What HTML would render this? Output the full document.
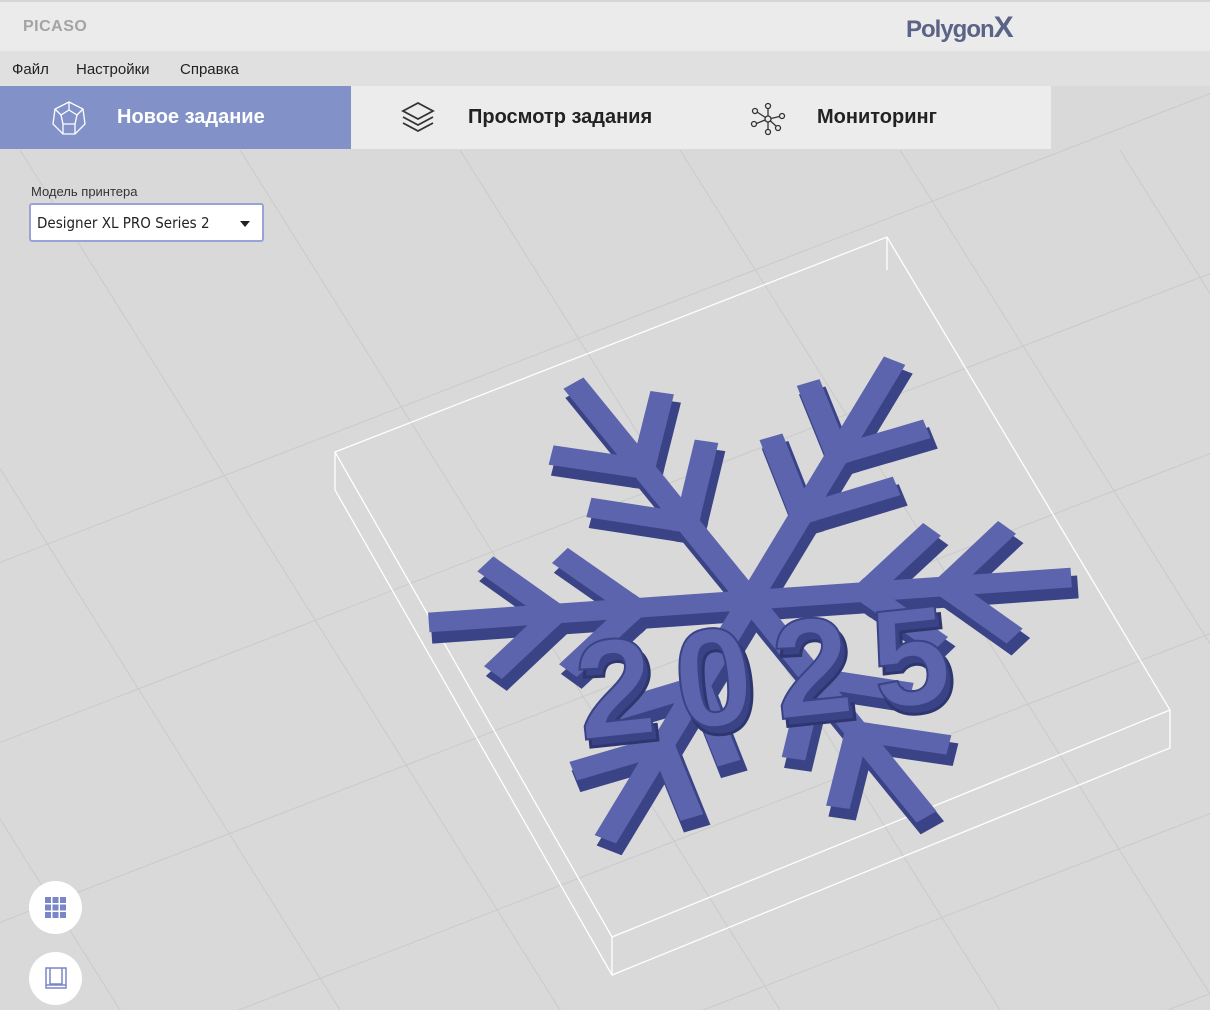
<!DOCTYPE html>
<html><head><meta charset="utf-8"><style>
*{margin:0;padding:0;box-sizing:border-box}
html,body{width:1210px;height:1010px;overflow:hidden}
body{background:#d9d9d9;font-family:"Liberation Sans","DejaVu Sans",sans-serif;position:relative}
.hdr{position:absolute;left:0;top:0;width:1210px;height:51px;background:#ebebeb;border-top:2px solid #d5d5d5}
.picaso{position:absolute;left:23px;top:16px;font-size:16px;color:#a3a3a3;font-weight:bold;letter-spacing:0.5px}
.poly{position:absolute;left:906px;top:9px;font-size:24px;color:#5b6386;font-weight:bold;letter-spacing:-1px}
.menu{position:absolute;left:0;top:51px;width:1210px;height:35px;background:#e0e0e0;font-size:15px;color:#222}
.menu span{position:absolute;top:10px}
.tabs{position:absolute;left:0;top:86px;width:1051px;height:63px;background:#ececec}
.tab{position:absolute;top:0;height:63px;font-size:20px;font-weight:bold;color:#222}
.tab .t{position:absolute;top:20px;white-space:nowrap}
.act{left:0;width:351px;background:#8292c8;color:#fff}
.lbl{position:absolute;left:31px;top:184px;font-size:13px;color:#333}
.sel{position:absolute;left:29px;top:203px;width:235px;height:39px;background:#fff;border:2px solid #9aa3d6;border-radius:3px;font-size:15px;color:#222;padding:9px 0 0 6px;font-family:"DejaVu Sans Condensed","DejaVu Sans",sans-serif}
.sel:after{content:"";position:absolute;right:12px;top:16px;border:5px solid transparent;border-top:6px solid #222}
.btn{position:absolute;left:29px;width:53px;height:53px;border-radius:50%;background:#fff}
</style></head><body>
<svg width="1210" height="1010" style="position:absolute;left:0;top:0">
<defs><g id="arm"><line x1="0" y1="0" x2="0" y2="-310"/><line x1="0" y1="-115" x2="-62" y2="-178"/><line x1="0" y1="-115" x2="62" y2="-178"/><line x1="0" y1="-195" x2="-58" y2="-253"/><line x1="0" y1="-195" x2="58" y2="-253"/></g></defs>
<g stroke="#cacaca" stroke-width="1" fill="none">
<line x1="-200" y1="640" x2="1400" y2="20"/><line x1="-200" y1="820" x2="1400" y2="200"/>
<line x1="-200" y1="1000" x2="1400" y2="380"/><line x1="-200" y1="1180" x2="1400" y2="560"/>
<line x1="-200" y1="1360" x2="1400" y2="740"/><line x1="-200" y1="1540" x2="1400" y2="920"/>
<line x1="20" y1="150" x2="560" y2="1010"/><line x1="240" y1="150" x2="780" y2="1010"/>
<line x1="460" y1="150" x2="1000" y2="1010"/><line x1="680" y1="150" x2="1220" y2="1010"/>
<line x1="900" y1="150" x2="1440" y2="1010"/><line x1="-200" y1="150" x2="340" y2="1010"/>
<line x1="-420" y1="150" x2="120" y2="1010"/><line x1="1120" y1="150" x2="1660" y2="1010"/>
</g>
<g stroke="#fff" stroke-width="1.3" fill="none">
<polygon points="335,452 887,237 1170,710 612,937"/>
<polyline points="335,452 335,490 612,975 1170,748 1170,710"/>
<line x1="612" y1="937" x2="612" y2="975"/><line x1="887" y1="237" x2="887" y2="270"/>
</g>
<g transform="translate(750,600) rotate(-4) scale(1,0.82) rotate(90)">
<g stroke="#3a4386" stroke-width="28" stroke-linecap="square" fill="none" transform="translate(12,-4)">
<use href="#arm"/><use href="#arm" transform="rotate(60)"/><use href="#arm" transform="rotate(120)"/><use href="#arm" transform="rotate(180)"/><use href="#arm" transform="rotate(240)"/><use href="#arm" transform="rotate(300)"/>
</g>
<g stroke="#5b64ac" stroke-width="24" stroke-linecap="square" fill="none">
<use href="#arm"/><use href="#arm" transform="rotate(60)"/><use href="#arm" transform="rotate(120)"/><use href="#arm" transform="rotate(180)"/><use href="#arm" transform="rotate(240)"/><use href="#arm" transform="rotate(300)"/>
</g>
</g>
<text x="580" y="728" font-family="Liberation Sans,sans-serif" font-size="140" font-weight="bold" fill="#3a4386" stroke="#2e3670" stroke-width="3" textLength="375" transform="rotate(-6 770 680)">2025</text>
<text x="576" y="720" font-family="Liberation Sans,sans-serif" font-size="140" font-weight="bold" fill="#5b64ac" stroke="#3a4386" stroke-width="2" textLength="375" transform="rotate(-6 770 680)">2025</text>
</svg>
<div class="hdr"><div class="picaso">PICASO</div><div class="poly">Polygon<span style="font-size:30px;color:#5b6386">X</span></div></div>
<div class="menu"><span style="left:12px">Файл</span><span style="left:76px">Настройки</span><span style="left:180px">Справка</span></div>
<div class="tabs">
<div class="tab act"><svg style="position:absolute;left:51px;top:14px" width="36" height="36" viewBox="0 0 36 36" fill="none" stroke="#fff" stroke-width="1.3"><polygon points="18,2 32,9 34,24 24,34 12,34 2,24 4,9"/><polygon points="18,10 26,15 24,24 12,24 10,15"/><path d="M18 2V10M26 15L32 9M24 24L24 34M12 24L12 34M10 15L4 9"/></svg><span class="t" style="left:117px">Новое задание</span></div>
<div class="tab" style="left:351px"><svg style="position:absolute;left:49px;top:14px" width="36" height="36" viewBox="0 0 36 36" fill="none" stroke="#333" stroke-width="1.8"><path d="M18 3L33 11L18 19L3 11Z"/><path d="M3 17L18 25L33 17"/><path d="M3 23L18 31L33 23"/></svg><span class="t" style="left:117px">Просмотр задания</span></div>
<div class="tab" style="left:700px"><svg style="position:absolute;left:50px;top:16px" width="38" height="34" viewBox="0 0 38 34" fill="none" stroke="#333" stroke-width="1.3"><circle cx="18" cy="17" r="3"/><circle cx="18" cy="4" r="2.5"/><circle cx="5" cy="9" r="2.5"/><circle cx="4" cy="22" r="2.5"/><circle cx="32" cy="14" r="2.5"/><circle cx="18" cy="30" r="2.5"/><circle cx="28" cy="26" r="2.5"/><path d="M18 14V6.5M15.5 15.5L7 10M15 18L6.5 21.5M21 16.5L29.5 14.5M18 20V27.5M20.5 19L26 24"/></svg><span class="t" style="left:117px">Мониторинг</span></div>
</div>
<div class="lbl">Модель принтера</div>
<div class="sel">Designer XL PRO Series 2</div>
<div class="btn" style="top:881px"><svg style="position:absolute;left:16px;top:16px" width="21" height="21"><g fill="#7b86c8"><rect x="0" y="0" width="6" height="6"/><rect x="7.5" y="0" width="6" height="6"/><rect x="15" y="0" width="6" height="6"/><rect x="0" y="7.5" width="6" height="6"/><rect x="7.5" y="7.5" width="6" height="6"/><rect x="15" y="7.5" width="6" height="6"/><rect x="0" y="15" width="6" height="6"/><rect x="7.5" y="15" width="6" height="6"/><rect x="15" y="15" width="6" height="6"/></g></svg></div>
<div class="btn" style="top:952px"><svg style="position:absolute;left:16px;top:15px" width="22" height="22" fill="none" stroke="#7b86c8" stroke-width="1.5"><rect x="1" y="1" width="20" height="20"/><path d="M5 1V17H17V1M1 18H21"/></svg></div>
</body></html>
